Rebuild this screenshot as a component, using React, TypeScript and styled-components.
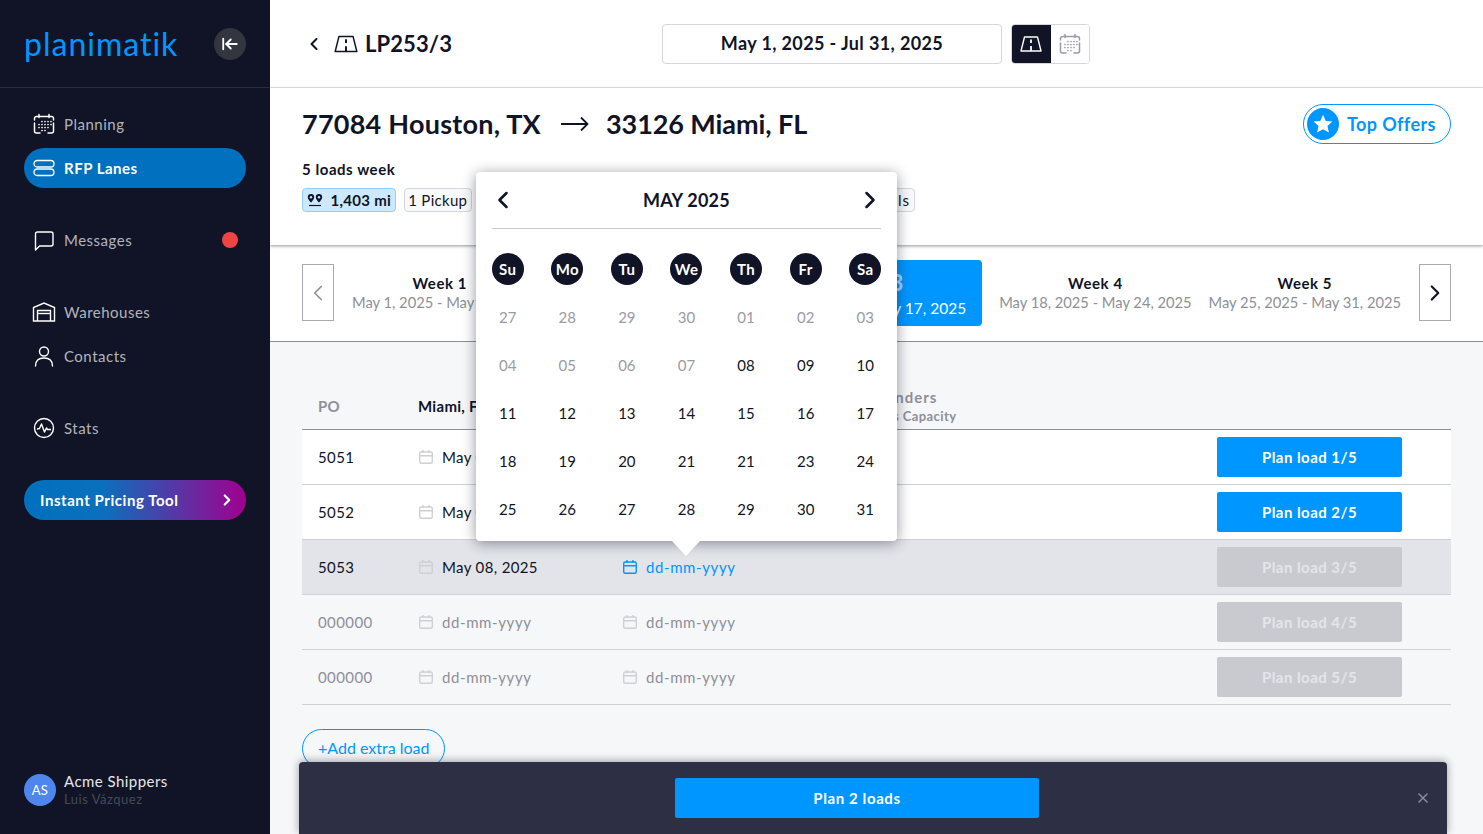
/* External imports */
import React from 'react'
import styled, { createGlobalStyle } from 'styled-components'
import { ArrowLeftToLine, ChevronLeft, ChevronRight, X } from 'lucide-react'

const NAVY = '#101426'
const BLUE = '#0096ff'
const FONT = '"Lato", "Open Sans", sans-serif'

const GlobalStyle = createGlobalStyle`
  html, body {
    margin: 0;
    padding: 0;
    height: 100%;
    overflow: hidden;
  }
  body {
    font-family: ${FONT};
    color: ${NAVY};
    background: #fff;
  }
  * { box-sizing: border-box; }
`

/* Icons */
type IconProps = { size?: number; color?: string }

const RoadIcon = ({ size = 26, color = 'currentColor' }: IconProps) => (
  <svg width={size} height={size} viewBox="0 0 24 24" fill="none" stroke={color} strokeWidth="1.4">
    <path d="M5.500 5h13L22 19H2z" strokeLinejoin="round" />
    <path d="M12 7.500v3.500M12 14v5" strokeWidth="1.800" />
  </svg>
)

const PlanningIcon = ({ size = 24, color = 'currentColor' }: IconProps) => (
  <svg width={size} height={size} viewBox="0 0 24 24" fill="none" stroke={color} strokeWidth="1.5" strokeLinecap="round">
    <path d="M7 2.500v3M17 2.500v3" />
    <path d="M2.500 8V6.500a2 2 0 0 1 2-2h15a2 2 0 0 1 2 2V8" />
    <path d="M2.500 11v8a2 2 0 0 0 2 2H8M16 21h3.500a2 2 0 0 0 2-2v-8" />
    <path
      d="M10 9.500h.01M13 9.500h.01M16 9.500h.01M19 9.500h.01M7 12.500h.01M10 12.500h.01M13 12.500h.01M16 12.500h.01M19 12.500h.01M7 15.500h.01M10 15.500h.01M13 15.500h.01M16 15.500h.01M10 18.500h.01M13 18.500h.01"
      strokeWidth="1.700"
    />
  </svg>
)

const LanesIcon = ({ size = 24, color = 'currentColor' }: IconProps) => (
  <svg width={size} height={size} viewBox="0 0 24 24" fill="none" stroke={color} strokeWidth="1.300">
    <rect x="2" y="4.500" width="20" height="6.500" rx="3.250" />
    <rect x="2" y="13" width="20" height="6.500" rx="3.250" />
  </svg>
)

const MessageIcon = ({ size = 24, color = 'currentColor' }: IconProps) => (
  <svg width={size} height={size} viewBox="0 0 24 24" fill="none" stroke={color} strokeWidth="1.400" strokeLinejoin="round">
    <path d="M3.500 22v-16a2 2 0 0 1 2-2h13.500a2 2 0 0 1 2 2v10a2 2 0 0 1-2 2H7.500z" />
  </svg>
)

const WarehouseIcon = ({ size = 24, color = 'currentColor' }: IconProps) => (
  <svg width={size} height={size} viewBox="0 0 24 24" fill="none" stroke={color} strokeWidth="1.400">
    <path d="M1.500 21V7.500L12 3l10.500 4.500V21z" />
    <path d="M5.500 21V10.500h13V21" />
    <path d="M5.500 13.500h13" />
  </svg>
)

const ContactIcon = ({ size = 24, color = 'currentColor' }: IconProps) => (
  <svg width={size} height={size} viewBox="0 0 24 24" fill="none" stroke={color} strokeWidth="1.400" strokeLinecap="round">
    <circle cx="12" cy="7.500" r="4.500" />
    <path d="M3.500 22c0-5 3-8 8.500-8s8.500 3 8.500 8" />
  </svg>
)

const StatsIcon = ({ size = 24, color = 'currentColor' }: IconProps) => (
  <svg width={size} height={size} viewBox="0 0 24 24" fill="none" stroke={color} strokeWidth="1.400" strokeLinejoin="round">
    <circle cx="12" cy="12" r="9.500" />
    <path d="M5 13l2.500-.5L9.500 8l3 8 2-4 1 1.500H19" />
  </svg>
)

const DateIcon = ({ size = 16, color = 'currentColor' }: IconProps) => (
  <svg width={size} height={size} viewBox="0 0 16 16" fill="none" stroke={color} strokeWidth="1.400">
    <rect x="1.700" y="3" width="12.600" height="11.300" rx="1.500" />
    <path d="M5 1v3M11 1v3M1.700 6.800h12.600" />
  </svg>
)

const PinsIcon = () => (
  <svg width="16" height="14" viewBox="0 0 16 14" fill="none">
    <path d="M4 1a3.200 3.200 0 0 0-3.200 3.200C.8 6.200 4 9.500 4 9.500s3.200-3.300 3.200-5.300A3.200 3.200 0 0 0 4 1z" fill={NAVY} />
    <path d="M12 1a3.200 3.200 0 0 0-3.200 3.200c0 2 3.200 5.300 3.200 5.300s3.200-3.300 3.200-5.300A3.200 3.200 0 0 0 12 1z" fill={NAVY} />
    <circle cx="4" cy="4.200" r="1.200" fill="#cce9ff" />
    <circle cx="12" cy="4.200" r="1.200" fill="#cce9ff" />
    <path d="M2 12.500h12" stroke={NAVY} strokeWidth="1.200" />
  </svg>
)

const LongArrow = () => (
  <svg width="28" height="16" viewBox="0 0 28 16" fill="none" stroke={NAVY} strokeWidth="1.800">
    <path d="M0 8h26.500M20 1.500L26.500 8 20 14.500" />
  </svg>
)

const StarIcon = () => (
  <svg width="20" height="20" viewBox="0 0 20 20" fill="#fff">
    <path d="M10 .8l2.800 6.100 6.600.7-4.900 4.500 1.400 6.500L10 15.300l-5.900 3.300 1.400-6.500L.6 7.600l6.600-.7z" />
  </svg>
)

/* Sidebar */
const Page = styled.div`
  position: relative;
  display: flex;
  width: 100%;
  height: 834px;
  overflow: hidden;
`

const Sidebar = styled.aside`
  display: flex;
  flex-direction: column;
  flex: 0 0 270px;
  background: ${NAVY};
`

const Brand = styled.div`
  display: flex;
  align-items: center;
  justify-content: space-between;
  height: 88px;
  padding: 0 24px;
  border-bottom: 1px solid #2a2d3d;
`

const Logo = styled.span`
  font-size: 32px;
  font-weight: 400;
  line-height: 1;
  letter-spacing: 1px;
  color: ${BLUE};
`

const CollapseButton = styled.div`
  display: flex;
  align-items: center;
  justify-content: center;
  width: 32px;
  height: 32px;
  border-radius: 50%;
  color: #fff;
  background: #33353f;
`

const NavGroup = styled.nav<{ $top: number }>`
  display: flex;
  flex-direction: column;
  gap: 4px;
  margin: ${(p) => p.$top}px 24px 0;
`

const NavItem = styled.div<{ $active?: boolean }>`
  display: flex;
  align-items: center;
  gap: 8px;
  height: 40px;
  padding: 0 8px;
  border-radius: 20px;
  font-size: 15px;
  font-weight: ${(p) => (p.$active ? 700 : 400)};
  letter-spacing: 0.5px;
  color: ${(p) => (p.$active ? '#fff' : '#b3b4bc')};
  background: ${(p) => (p.$active ? '#0070bf' : 'transparent')};

  svg { color: #fff; flex: none; }
`

const NavLabel = styled.span`
  margin-bottom: 1px;
`

const UnreadDot = styled.span`
  width: 16px;
  height: 16px;
  margin-left: auto;
  border-radius: 50%;
  background: #ef4444;
`

const PricingButton = styled.div`
  display: flex;
  align-items: center;
  justify-content: space-between;
  height: 40px;
  margin: 32px 24px 0;
  padding: 0 10px 0 16px;
  border-radius: 20px;
  font-size: 15px;
  font-weight: 700;
  letter-spacing: 0.55px;
  color: #fff;
  background: linear-gradient(90deg, #0070bf 0%, #0a70bd 35%, #a0008f 100%);
`

const Account = styled.div`
  display: flex;
  align-items: center;
  gap: 8px;
  margin: auto 24px 25px;
`

const Avatar = styled.div`
  display: flex;
  align-items: center;
  justify-content: center;
  width: 32px;
  height: 32px;
  border-radius: 50%;
  font-size: 13px;
  font-weight: 400;
  letter-spacing: 0.4px;
  color: #fff;
  background: #4f86ee;
`

const AccountText = styled.div`
  margin-bottom: 1px;
`

const AccountName = styled.div`
  font-size: 15px;
  line-height: 20px;
  letter-spacing: 0.45px;
  color: #e6e6ea;
`

const AccountUser = styled.div`
  font-size: 13px;
  line-height: 17px;
  letter-spacing: 0.5px;
  color: #464959;
`

/* Top bar */
const Main = styled.main`
  position: relative;
  display: flex;
  flex-direction: column;
  flex: 1;
  min-width: 0;
  background: #f6f7f9;
`

const TopBar = styled.header`
  display: flex;
  align-items: center;
  height: 88px;
  padding: 0 32px;
  background: #fff;
  border-bottom: 1px solid #e6e7ea;
`

const Breadcrumb = styled.div`
  display: flex;
  align-items: center;
  flex: 0 0 360px;
  font-size: 22px;
  font-weight: 700;
  letter-spacing: 0.1px;

  svg:first-child { margin: 0 9px 0 2px; }
  svg:nth-child(2) { margin-right: 6px; }
`

const DateRange = styled.div`
  display: flex;
  align-items: center;
  justify-content: center;
  width: 340px;
  height: 40px;
  padding-bottom: 1px;
  border: 1px solid #d5d6db;
  border-radius: 4px;
  font-size: 18px;
  font-weight: 700;
  letter-spacing: 0.38px;
`

const ViewToggle = styled.div`
  display: flex;
  height: 40px;
  margin-left: 9px;
  overflow: hidden;
  border: 1px solid #d5d6db;
  border-radius: 4px;
`

const ViewButton = styled.div<{ $active?: boolean }>`
  display: flex;
  align-items: center;
  justify-content: center;
  width: 38.5px;
  color: ${(p) => (p.$active ? '#fff' : '#9a9ba5')};
  background: ${(p) => (p.$active ? NAVY : '#fff')};
`

/* Route summary */
const RouteSection = styled.section`
  position: relative;
  z-index: 1;
  height: 157px;
  padding: 16px 32px 0;
  background: #fff;
  box-shadow: 0 1px 3px rgba(16, 20, 38, 0.45);
`

const RouteTitle = styled.div`
  display: flex;
  align-items: center;
  justify-content: space-between;
  height: 40px;
`

const RouteCities = styled.h1`
  display: flex;
  align-items: center;
  margin: 0 0 2px;
  font-size: 27px;
  font-weight: 700;

  svg { margin: 2px 17px 0 20px; }
`

const RouteCity = styled.span<{ $spacing: number }>`
  letter-spacing: ${(p) => p.$spacing}px;
`

const TopOffers = styled.div`
  display: flex;
  align-items: center;
  gap: 8px;
  width: 148px;
  height: 40px;
  padding-left: 3px;
  border: 1px solid ${BLUE};
  border-radius: 20px;
  font-size: 18px;
  font-weight: 700;
  letter-spacing: 0.4px;
  color: ${BLUE};
`

const StarBadge = styled.span`
  display: flex;
  align-items: center;
  justify-content: center;
  width: 32px;
  height: 32px;
  border-radius: 50%;
  background: ${BLUE};
`

const LoadsLabel = styled.div`
  margin-top: 15px;
  font-size: 15px;
  line-height: 20px;
  font-weight: 700;
  letter-spacing: 0.55px;
`

const TagRow = styled.div`
  display: flex;
  gap: 8px;
  width: 613px;
  margin-top: 9px;
`

const Tag = styled.span<{ $info?: boolean; $end?: boolean }>`
  display: flex;
  align-items: center;
  gap: 8px;
  height: 24px;
  margin-left: ${(p) => (p.$end ? 'auto' : 0)};
  padding: 0 ${(p) => (p.$end ? 4 : 3.5)}px 1px 3.5px;
  border: 1px solid ${(p) => (p.$info ? '#8fd0ff' : '#d5d6db')};
  border-radius: 4px;
  font-size: 15px;
  font-weight: ${(p) => (p.$info ? 700 : 400)};
  letter-spacing: ${(p) => (p.$end ? 1 : 0.3)}px;
  background: ${(p) => (p.$info ? '#cce9ff' : '#f8f9fb')};
`

/* Week strip */
const WeekStrip = styled.section`
  display: flex;
  align-items: center;
  height: 97px;
  padding: 0 32px;
  background: #fff;
  border-bottom: 1px solid #8e8f99;
`

const WeekArrow = styled.div<{ $muted?: boolean }>`
  display: flex;
  align-items: center;
  justify-content: center;
  flex: none;
  width: 32px;
  height: 57px;
  margin-bottom: 1px;
  border: 1px solid #a9aab2;
  color: ${(p) => (p.$muted ? '#8e8f99' : NAVY)};
`

const WeekList = styled.div`
  display: flex;
  flex: 1;
  min-width: 0;
  gap: 1px;
  padding: 0 10px;
`

const Week = styled.div<{ $active?: boolean }>`
  display: flex;
  flex-direction: column;
  align-items: center;
  justify-content: center;
  height: 66px;
  margin: ${(p) => (p.$active ? '0 8px 0 auto' : 0)};
  padding: ${(p) => (p.$active ? '2px 16px 0' : '0 8px 2px')};
  border-radius: 4px;
  white-space: nowrap;
  color: ${(p) => (p.$active ? '#fff' : NAVY)};
  background: ${(p) => (p.$active ? BLUE : 'transparent')};
`

const WeekName = styled.div<{ $active?: boolean }>`
  font-size: ${(p) => (p.$active ? 22 : 15)}px;
  line-height: ${(p) => (p.$active ? 26 : 20)}px;
  font-weight: 700;
  letter-spacing: 0.55px;
  color: ${(p) => (p.$active ? 'rgba(255, 255, 255, 0.65)' : NAVY)};
`

const WeekDates = styled.div<{ $active?: boolean }>`
  margin-top: ${(p) => (p.$active ? 2 : 0)}px;
  font-size: ${(p) => (p.$active ? 15.5 : 14.7)}px;
  line-height: ${(p) => (p.$active ? 20 : 19)}px;
  color: ${(p) => (p.$active ? '#fff' : '#8e8f99')};
`

/* Loads table */
const TableSection = styled.section`
  padding: 43px 32px 0;
`

const COLUMNS = '100px 204px 256px 1fr 185px'

const TableHead = styled.div`
  display: grid;
  grid-template-columns: ${COLUMNS};
  align-items: center;
  height: 45px;
  padding: 0 49px 2px 16px;
  border-bottom: 1px solid #8e8f99;
  font-size: 15px;
  font-weight: 700;
  letter-spacing: 0.3px;
`

const HeadLabel = styled.span<{ $muted?: boolean }>`
  margin-bottom: 1px;
  color: ${(p) => (p.$muted ? '#8e8f99' : NAVY)};
`

const HeadStack = styled.div`
  line-height: 18px;
  letter-spacing: 1px;
  color: #8e8f99;
`

const HeadSub = styled.div`
  margin: 1px 0 0 8px;
  font-size: 13px;
  line-height: 18px;
  letter-spacing: 0.4px;
`

const LoadRow = styled.div<{ $tone: 'ready' | 'current' | 'empty' }>`
  display: grid;
  grid-template-columns: ${COLUMNS};
  align-items: center;
  height: 55px;
  padding: 0 49px 0 16px;
  border-bottom: 1px solid #d0d1d6;
  font-size: 15px;
  letter-spacing: 0.4px;
  color: ${(p) => (p.$tone === 'empty' ? '#8e8f99' : NAVY)};
  background: ${(p) => ({ ready: '#fff', current: '#e2e4e9', empty: 'transparent' }[p.$tone])};
`

const PoCell = styled.span`
  margin-bottom: 1px;
`

const DateCell = styled.div<{ $empty?: boolean; $focus?: boolean }>`
  display: flex;
  align-items: center;
  gap: 8px;
  margin-bottom: 1px;
  letter-spacing: ${(p) => (p.$empty ? 0.6 : 0.35)}px;
  color: ${(p) => (p.$focus ? BLUE : p.$empty ? '#8e8f99' : 'inherit')};

  svg { color: ${(p) => (p.$focus ? BLUE : '#cfd0d6')}; }
`

const PlanButton = styled.div<{ $disabled?: boolean }>`
  grid-column: 5;
  display: flex;
  align-items: center;
  justify-content: center;
  height: 40px;
  padding-bottom: 1px;
  border-radius: 2px;
  font-size: 15px;
  font-weight: 700;
  letter-spacing: 0.45px;
  color: ${(p) => (p.$disabled ? '#e4e5e8' : '#fff')};
  background: ${(p) => (p.$disabled ? '#c9cad0' : BLUE)};
`

const AddLoad = styled.div`
  display: inline-flex;
  align-items: center;
  height: 39px;
  margin-top: 24px;
  padding: 0 14px 2px 15px;
  border: 1px solid ${BLUE};
  border-radius: 20px;
  font-size: 16px;
  color: ${BLUE};
`

/* Bottom action bar */
const ActionBar = styled.div`
  position: absolute;
  left: 29px;
  right: 36px;
  bottom: 0;
  z-index: 2;
  display: flex;
  align-items: flex-start;
  justify-content: center;
  height: 72px;
  padding-top: 16px;
  border-radius: 4px 4px 0 0;
  background: #2d2f45;
  box-shadow: 0 -1px 8px rgba(16, 20, 38, 0.4);
`

const ActionButton = styled.div`
  display: flex;
  align-items: center;
  justify-content: center;
  width: 364px;
  height: 40px;
  margin-right: 32px;
  padding-bottom: 1px;
  border-radius: 2px;
  font-size: 15px;
  font-weight: 700;
  letter-spacing: 0.6px;
  color: #fff;
  background: ${BLUE};
`

const CloseBar = styled.div`
  position: absolute;
  right: 16px;
  top: 28px;
  display: flex;
  color: #8e8f99;
`

/* Date picker */
const Picker = styled.div`
  position: absolute;
  left: 205.7px;
  top: 172px;
  z-index: 3;
  width: 421.6px;
  height: 369px;
  padding: 0 16px;
  border-radius: 4px;
  background: #fff;
  box-shadow: 0 2px 14px rgba(16, 20, 38, 0.45);
`

const PickerCaret = styled.div`
  position: absolute;
  left: 196px;
  bottom: -15px;
  width: 0;
  height: 0;
  border-left: 14px solid transparent;
  border-right: 14px solid transparent;
  border-top: 15px solid #fff;
`

const PickerHead = styled.div`
  display: flex;
  align-items: center;
  justify-content: space-between;
  height: 57px;
  border-bottom: 1px solid #c9cad0;
  font-size: 18px;
  font-weight: 700;
  letter-spacing: 0.2px;

  svg { display: block; margin: 0 -3px; }
`

const CalendarGrid = styled.div`
  display: grid;
  grid-template-columns: repeat(7, 32px);
  grid-auto-rows: 48px;
  justify-content: space-between;
  align-items: center;
  justify-items: center;
  margin-top: 16px;
`

const WeekdayBadge = styled.span`
  display: flex;
  align-items: center;
  justify-content: center;
  width: 32px;
  height: 32px;
  border-radius: 50%;
  font-size: 15px;
  font-weight: 700;
  letter-spacing: 0.3px;
  color: #fff;
  background: ${NAVY};
`

const DayCell = styled.span<{ $muted?: boolean }>`
  margin-bottom: 1px;
  font-size: 15px;
  color: ${(p) => (p.$muted ? '#9a9ba5' : NAVY)};
`

/* Data */
const WEEKS = [
  { name: 'Week 1', dates: 'May 1, 2025 - May 3, 2025' },
  { name: 'Week 2', dates: 'May 4, 2025 - May 10, 2025' },
  { name: 'Week 3', dates: 'May 11, 2025 - May 17, 2025', active: true },
  { name: 'Week 4', dates: 'May 18, 2025 - May 24, 2025' },
  { name: 'Week 5', dates: 'May 25, 2025 - May 31, 2025' },
]

const DAY_NAMES = ['Su', 'Mo', 'Tu', 'We', 'Th', 'Fr', 'Sa']

const DAYS = [
  '27', '28', '29', '30', '01', '02', '03',
  '04', '05', '06', '07', '08', '09', '10',
  '11', '12', '13', '14', '15', '16', '17',
  '18', '19', '20', '21', '21', '23', '24',
  '25', '26', '27', '28', '29', '30', '31',
]

const LOADS = [
  { po: '5051', first: 'May 08, 2025', second: 'May 08, 2025', tone: 'ready' as const },
  { po: '5052', first: 'May 08, 2025', second: 'May 08, 2025', tone: 'ready' as const },
  { po: '5053', first: 'May 08, 2025', second: 'dd-mm-yyyy', tone: 'current' as const },
  { po: '000000', first: 'dd-mm-yyyy', second: 'dd-mm-yyyy', tone: 'empty' as const },
  { po: '000000', first: 'dd-mm-yyyy', second: 'dd-mm-yyyy', tone: 'empty' as const },
]

export default function App() {
  return (
    <Page>
      <GlobalStyle />
      <Sidebar>
        <Brand>
          <Logo>planimatik</Logo>
          <CollapseButton>
            <ArrowLeftToLine size={18} strokeWidth={2.4} />
          </CollapseButton>
        </Brand>
        <NavGroup $top={16}>
          <NavItem><PlanningIcon /><NavLabel>Planning</NavLabel></NavItem>
          <NavItem $active><LanesIcon /><NavLabel>RFP Lanes</NavLabel></NavItem>
        </NavGroup>
        <NavGroup $top={32}>
          <NavItem><MessageIcon /><NavLabel>Messages</NavLabel><UnreadDot /></NavItem>
        </NavGroup>
        <NavGroup $top={32}>
          <NavItem><WarehouseIcon /><NavLabel>Warehouses</NavLabel></NavItem>
          <NavItem><ContactIcon /><NavLabel>Contacts</NavLabel></NavItem>
        </NavGroup>
        <NavGroup $top={32}>
          <NavItem><StatsIcon /><NavLabel>Stats</NavLabel></NavItem>
        </NavGroup>
        <PricingButton>
          <NavLabel>Instant Pricing Tool</NavLabel>
          <ChevronRight size={18} strokeWidth={3} />
        </PricingButton>
        <Account>
          <Avatar>AS</Avatar>
          <AccountText>
            <AccountName>Acme Shippers</AccountName>
            <AccountUser>Luis Vázquez</AccountUser>
          </AccountText>
        </Account>
      </Sidebar>

      <Main>
        <TopBar>
          <Breadcrumb>
            <ChevronLeft size={20} strokeWidth={2.4} />
            <RoadIcon />
            LP253/3
          </Breadcrumb>
          <DateRange>May 1, 2025 - Jul 31, 2025</DateRange>
          <ViewToggle>
            <ViewButton $active><RoadIcon size={24} /></ViewButton>
            <ViewButton><PlanningIcon /></ViewButton>
          </ViewToggle>
        </TopBar>

        <RouteSection>
          <RouteTitle>
            <RouteCities>
              <RouteCity $spacing={0.24}>77084 Houston, TX</RouteCity>
              <LongArrow />
              <RouteCity $spacing={-0.08}>33126 Miami, FL</RouteCity>
            </RouteCities>
            <TopOffers>
              <StarBadge><StarIcon /></StarBadge>
              Top Offers
            </TopOffers>
          </RouteTitle>
          <LoadsLabel>5 loads week</LoadsLabel>
          <TagRow>
            <Tag $info><PinsIcon />1,403 mi</Tag>
            <Tag>1 Pickup</Tag>
            <Tag>1 Delivery</Tag>
            <Tag $end>Load tools</Tag>
          </TagRow>
        </RouteSection>

        <WeekStrip>
          <WeekArrow $muted><ChevronLeft size={26} strokeWidth={1.6} /></WeekArrow>
          <WeekList>
            {WEEKS.map((week) => (
              <Week key={week.name} $active={week.active}>
                <WeekName $active={week.active}>{week.name}</WeekName>
                <WeekDates $active={week.active}>{week.dates}</WeekDates>
              </Week>
            ))}
          </WeekList>
          <WeekArrow><ChevronRight size={26} strokeWidth={2} /></WeekArrow>
        </WeekStrip>

        <TableSection>
          <TableHead>
            <HeadLabel $muted>PO</HeadLabel>
            <HeadLabel>Miami, FL</HeadLabel>
            <HeadLabel>Houston, TX</HeadLabel>
            <HeadStack>
              Tenders
              <HeadSub>vs Capacity</HeadSub>
            </HeadStack>
          </TableHead>
          {LOADS.map((load, i) => (
            <LoadRow key={i} $tone={load.tone}>
              <PoCell>{load.po}</PoCell>
              <DateCell $empty={load.first === 'dd-mm-yyyy'}>
                <DateIcon />{load.first}
              </DateCell>
              <DateCell
                $empty={load.second === 'dd-mm-yyyy'}
                $focus={load.tone === 'current'}
              >
                <DateIcon />{load.second}
              </DateCell>
              <PlanButton $disabled={load.tone !== 'ready'}>Plan load {i + 1}/5</PlanButton>
            </LoadRow>
          ))}
          <AddLoad>+Add extra load</AddLoad>
        </TableSection>

        <ActionBar>
          <ActionButton>Plan 2 loads</ActionButton>
          <CloseBar><X size={16} strokeWidth={2} /></CloseBar>
        </ActionBar>

        <Picker>
          <PickerHead>
            <ChevronLeft size={28} strokeWidth={2.2} />
            MAY 2025
            <ChevronRight size={28} strokeWidth={2.2} />
          </PickerHead>
          <CalendarGrid>
            {DAY_NAMES.map((day) => <WeekdayBadge key={day}>{day}</WeekdayBadge>)}
            {DAYS.map((day, i) => (
              <DayCell key={i} $muted={i < 11}>{day}</DayCell>
            ))}
          </CalendarGrid>
          <PickerCaret />
        </Picker>
      </Main>
    </Page>
  )
}
